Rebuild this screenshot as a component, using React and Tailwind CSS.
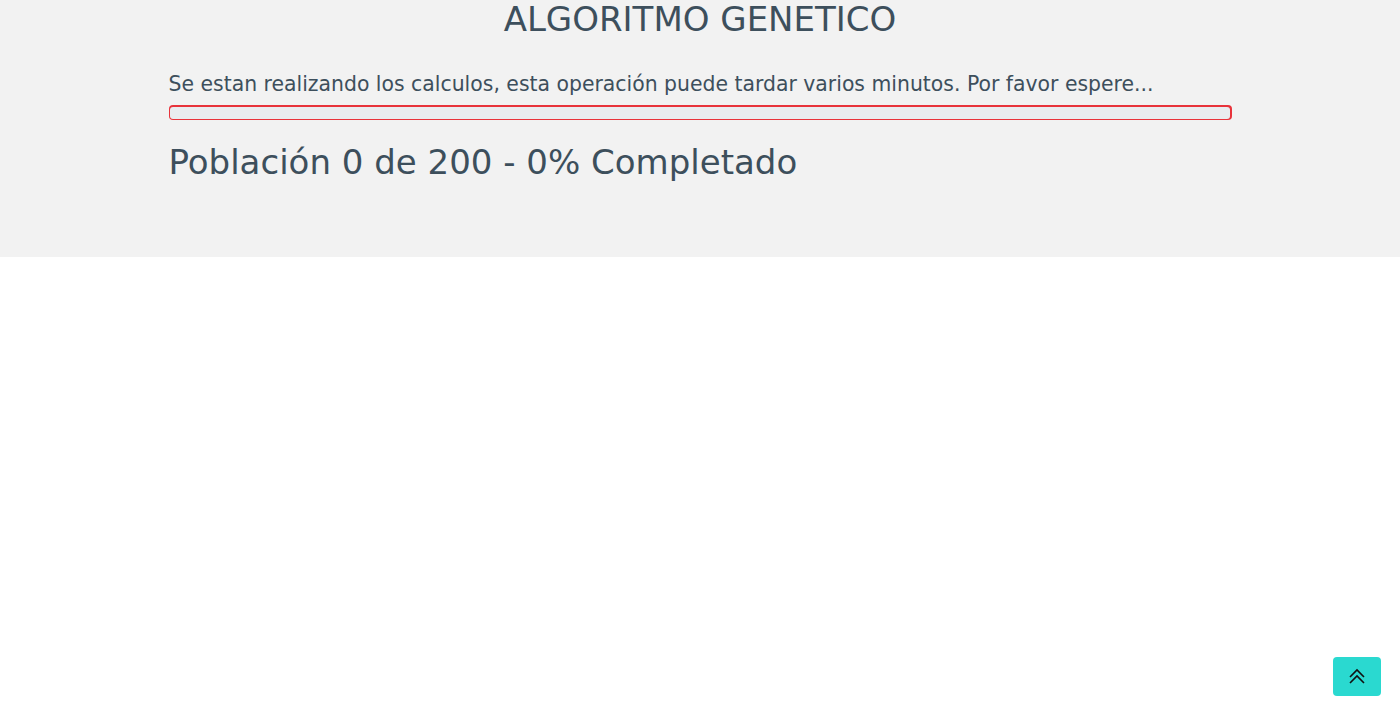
import React from "react";

export default function App() {
  return (
    <div className="min-h-[715px] bg-white relative" style={{ fontFamily: '"DejaVu Sans", sans-serif' }}>
      <div className="bg-[#f2f2f2] h-[257px]">
        <div className="w-[1063px] mx-auto text-[#3d4f5c]">
          <h1 className="text-center text-[34px] leading-[38px]">ALGORITMO GENETICO</h1>
          <p className="mt-[32px] text-[20.4px] leading-[28px]">
            Se estan realizando los calculos, esta operación puede tardar varios minutos. Por favor espere...
          </p>
          <div className="mt-[7px] h-[15px] p-[1.5px] rounded-[4px] bg-[#e8333b]">
            <div className="h-full w-full rounded-[3px] bg-[#e9ecef]"></div>
          </div>
          <h2 className="mt-[20px] text-[34px] leading-[44px]">Población 0 de 200 - 0% Completado</h2>
        </div>
      </div>
      <button className="absolute left-[1333px] top-[657px] w-[48px] h-[39px] rounded-[4px] bg-[#2ad9d0] flex items-center justify-center">
        <svg width="20" height="20" viewBox="0 0 20 20" fill="none" stroke="#111" strokeWidth="1.6">
          <path d="M3 10 L10 3 L17 10" />
          <path d="M3 16 L10 9 L17 16" />
        </svg>
      </button>
    </div>
  );
}
